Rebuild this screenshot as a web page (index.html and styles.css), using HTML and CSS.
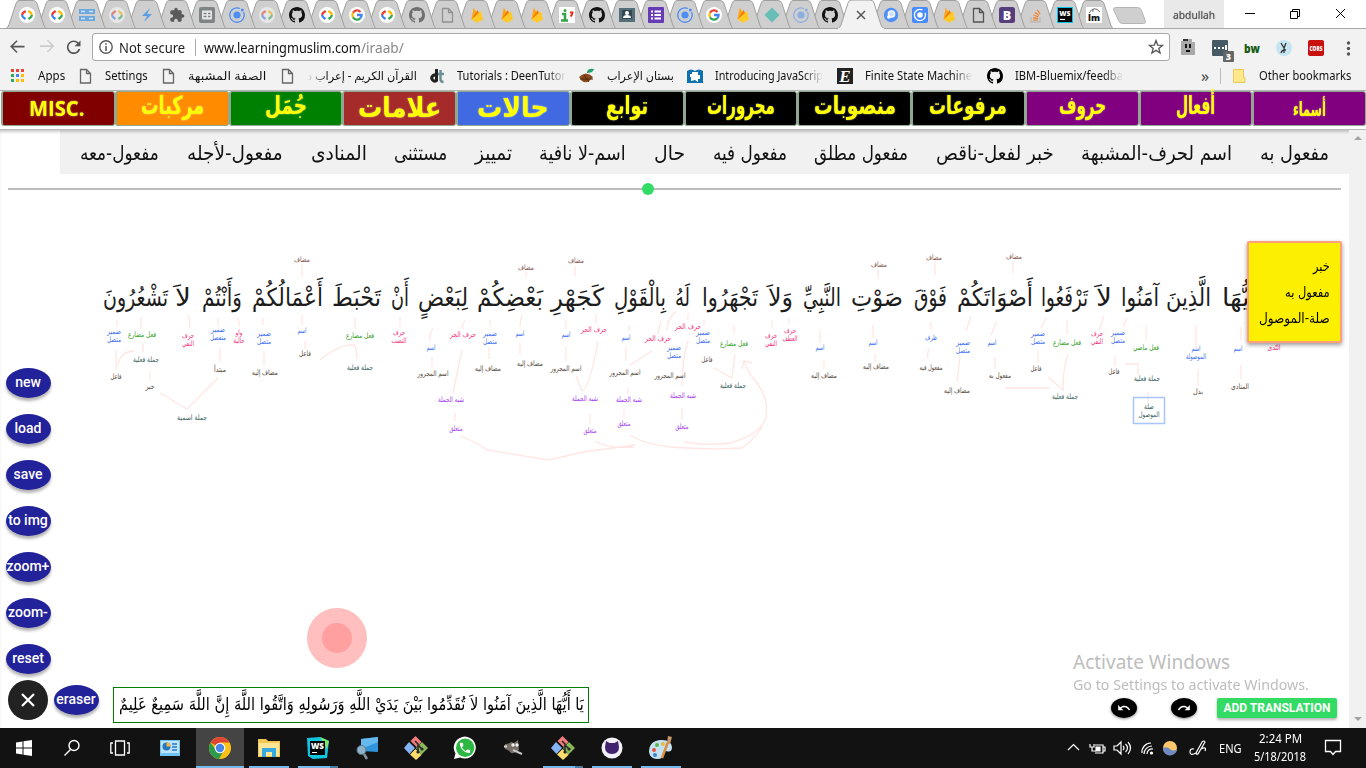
FILE: index.html
```html
<!DOCTYPE html>
<html lang="en">
<head>
<meta charset="utf-8">
<title>iraab</title>
<link rel="stylesheet" href="styles.css">
</head>
<body>
<svg class="defs" aria-hidden="true">
  <symbol id="dev" viewBox="0 0 16 16"><circle cx="8" cy="8" r="8" fill="#fff"/><g fill="none" stroke-width="2.3"><path d="M6.7 4 4.6 5.5Q3.2 6.6 3.2 8" stroke="#ea4335"/><path d="M3.2 8Q3.2 9.4 4.4 10.4L6.5 12" stroke="#4285f4"/><path d="M9.3 4 11.4 5.5Q12.8 6.6 12.8 8" stroke="#fbbc05"/><path d="M12.8 8Q12.8 9.4 11.6 10.4L9.5 12" stroke="#34a853"/></g></symbol>
  <symbol id="server" viewBox="0 0 16 16"><path d="M0 2h16v5H0zM0 9h16v5H0z" fill="#6ba7e0"/><path d="M2 4.500h4M10 4.500h4M2 11.500h4M10 11.500h4" stroke="#cfe4f8" stroke-width="1.4"/></symbol>
  <symbol id="bolt" viewBox="0 0 16 16"><path d="M11 1 3 9h5l-3 6 8-8H8z" fill="#5b9fe0"/></symbol>
  <symbol id="puzzle" viewBox="0 0 24 24"><path fill="#5a5a5a" d="M20.5 11H19V7c0-1.100-.9-2-2-2h-4V3.500C13 2.120 11.880 1 10.500 1S8 2.120 8 3.500V5H4c-1.100 0-1.990.9-1.990 2v3.800H3.500c1.490 0 2.700 1.210 2.700 2.700s-1.210 2.700-2.700 2.700H2V20c0 1.100.9 2 2 2h3.800v-1.500c0-1.490 1.210-2.700 2.700-2.700 1.490 0 2.700 1.210 2.700 2.700V22H17c1.100 0 2-.9 2-2v-4h1.500c1.380 0 2.500-1.120 2.500-2.500S21.880 11 20.500 11z"/></symbol>
  <symbol id="form" viewBox="0 0 16 16"><rect width="16" height="16" rx="2" fill="#7f8586"/><rect x="3" y="3.500" width="10" height="9" rx="1" fill="#e8e8e8"/><path d="M4.500 6.500h3M9 6.500h2.500M4.500 9.500h3M9 9.500h2.500" stroke="#7f8586" stroke-width="1.300"/></symbol>
  <symbol id="ionic" viewBox="0 0 16 16"><circle cx="8" cy="8" r="3.600" fill="#4e8ef7"/><path d="M11 1.500a7.200 7.200 0 1 0 3.500 3.500" fill="none" stroke="#4e8ef7" stroke-width="1.300"/><circle cx="13.300" cy="3" r="1.500" fill="#4e8ef7"/></symbol>
  <symbol id="github" viewBox="0 0 16 16"><path fill="currentColor" d="M8 0C3.580 0 0 3.580 0 8c0 3.540 2.290 6.530 5.470 7.590.4.070.55-.17.55-.38 0-.19-.01-.82-.01-1.490-2.010.37-2.530-.49-2.690-.94-.09-.23-.48-.94-.82-1.130-.28-.15-.68-.52-.01-.53.63-.01 1.080.58 1.230.82.72 1.210 1.870.87 2.330.66.07-.52.28-.87.51-1.070-1.780-.2-3.640-.89-3.640-3.950 0-.87.31-1.590.82-2.150-.08-.2-.36-1.020.08-2.120 0 0 .67-.21 2.200.82.64-.18 1.320-.27 2-.27s1.360.09 2 .27c1.530-1.040 2.200-.82 2.200-.82.44 1.100.16 1.920.08 2.120.51.56.82 1.270.82 2.150 0 3.070-1.870 3.750-3.650 3.950.29.25.54.73.54 1.480 0 1.070-.01 1.930-.01 2.200 0 .21.15.46.55.38A8.010 8.010 0 0 0 16 8c0-4.420-3.580-8-8-8z"/></symbol>
  <symbol id="google" viewBox="0 0 16 16"><circle cx="8" cy="8" r="8" fill="#fff"/><g fill="none" stroke-width="2.300"><path d="M11.500 4.900A4.600 4.600 0 0 0 4 5.800" stroke="#ea4335"/><path d="M4 5.800a4.600 4.600 0 0 0 0 4.400" stroke="#fbbc05"/><path d="M4 10.200a4.600 4.600 0 0 0 7.200 1.200" stroke="#34a853"/><path d="M11.200 11.400Q12.600 10 12.600 8H8" stroke="#4285f4"/></g></symbol>
  <symbol id="page" viewBox="0 0 16 16"><path d="M3.500 1.500h6l4 4v9.500h-10zM9.500 1.500v4h4" fill="none" stroke="currentColor" stroke-width="1.300"/></symbol>
  <symbol id="firebase" viewBox="0 0 16 16"><path d="M2.500 12.500 4.700.5l3.500 6z" fill="#ffa712"/><path d="M2.500 12.500 8.500 3l2 4z" fill="#f57c00"/><path d="m2.500 12.500 9.500-8.500 2 8.500-5.800 3.300z" fill="#ffca28"/></symbol>
  <symbol id="imark" viewBox="0 0 16 16"><path d="M0 0h16v16H0z" fill="#fff"/><path d="M3 7h3v6M2 13.500h7" fill="none" stroke="#35a54a" stroke-width="2.500"/><circle cx="6" cy="3.500" r="1.500" fill="#35a54a"/><path d="M11 5.500h2.500q0 2.500-2 4" fill="none" stroke="#e53020" stroke-width="2"/></symbol>
  <symbol id="card" viewBox="0 0 16 16"><path d="M0 1h16v14H0z" fill="#546e7a"/><path d="M3 3h10v9H3z" fill="#37474f"/><circle cx="8" cy="6" r="2" fill="#fff"/><path d="M4 11q0-3 4-3t4 3z" fill="#fff"/></symbol>
  <symbol id="list" viewBox="0 0 16 16"><rect width="16" height="16" rx="1" fill="#673ab7"/><path d="M3 4.500h2M6.500 4.500H13M3 8h2M6.500 8H13M3 11.500h2M6.500 11.500H13" stroke="#fff" stroke-width="1.800"/></symbol>
  <symbol id="diamond" viewBox="0 0 16 16"><path d="m8 .5 7.500 7.500L8 15.500.5 8z" fill="#67bfb8"/></symbol>
  <symbol id="rings" viewBox="0 0 16 16"><circle cx="8" cy="8" r="7.200" fill="#4e8ef7"/><circle cx="8.500" cy="7" r="3.200" fill="#cfe0ff" stroke="#fff" stroke-width="1.300"/><circle cx="5.800" cy="10" r="1.800" fill="#fff"/></symbol>
  <symbol id="ionicsq" viewBox="0 0 16 16"><rect width="16" height="16" rx="2" fill="#488aff"/><circle cx="8" cy="8" r="2.800" fill="#fff"/><path d="M10.500 3a5.600 5.600 0 1 0 2.600 2.800" fill="none" stroke="#fff" stroke-width="1.300"/></symbol>
  <symbol id="boot" viewBox="0 0 16 16"><rect width="16" height="16" rx="2.500" fill="#563d7c"/><text x="8" y="12.500" class="glyph" font-size="12.500" fill="#fff">B</text></symbol>
  <symbol id="stack" viewBox="0 0 16 16"><path d="M3 10v5h9v-5" fill="none" stroke="#bcbbbb" stroke-width="1.400"/><path d="M5 13h5M5 10.800l5 .6M5.500 8.300l4.900 1.500M6.800 5.500l4.300 2.800M9.200 2.800l3 4.200" stroke="#f48024" stroke-width="1.200"/></symbol>
  <symbol id="ws" viewBox="0 0 16 16"><path d="M0 0h16v16H0z" fill="#07c3f2"/><path d="M1 1h14v14H1z" fill="#000"/><text x="8" y="8.500" class="glyph" font-size="7" fill="#fff">WS</text><path d="M3 12.500h5" stroke="#fff" stroke-width="1.200"/></symbol>
  <symbol id="lm" viewBox="0 0 16 16"><path d="M0 0h16v16H0z" fill="#fff"/><path d="M3 6Q8-2 14 5M7 2v3" fill="none" stroke="#666"/><text x="8" y="14" class="glyph" font-size="9" fill="#111" textLength="12">lm</text></symbol>
  <symbol id="git" viewBox="0 0 24 24"><path d="m11.500 0 6 6-5 5-6-6z" fill="#f27b7b"/><path d="m5 6 6 6-5.500 6L0 12z" fill="#83b3f5"/><path d="m18 6 6 6-7 7-5-7z" fill="#88b858"/><path d="m11.500 13 6 6-5.500 5-6-5.500z" fill="#fbdc6c"/><path d="m11 5 3 3v9M14 9l4 4" fill="none" stroke="#282828" stroke-width="1.600"/><circle cx="14" cy="16" r="1.600" fill="#282828"/><circle cx="18" cy="13" r="1.600" fill="#282828"/></symbol>
</svg>

<header class="chrome">
  <div class="titlebar">
    <svg class="tabs" id="tabs" width="1156" height="29"></svg>
    <span class="profile"><span data-w="42">abdullah</span></span>
    <svg class="winctl" width="132" height="28" fill="none" stroke="#000"><path d="M15 13.500h10M60.500 11.500h7v7h-7zM62.500 11V9.500h7v7H68M106 9l9 9M115 9l-9 9"/></svg>
  </div>
  <div class="toolbar">
    <svg width="92" height="34"><g transform="translate(8.500 8) scale(.8)" fill="#555"><path d="M20 11H5.800l5.600-5.600L10 4l-8 8 8 8 1.400-1.400L5.800 13H20z"/></g><g transform="translate(56 7.500) scale(-.8 .8)" fill="#ccc"><path d="M20 11H5.800l5.600-5.600L10 4l-8 8 8 8 1.400-1.400L5.800 13H20z"/></g><g transform="translate(63.500 8) scale(.85)" fill="#555"><path d="M17.650 6.350C16.200 4.900 14.210 4 12 4c-4.420 0-7.990 3.580-7.990 8s3.570 8 7.990 8c3.730 0 6.840-2.550 7.730-6h-2.080c-.82 2.330-3.040 4-5.650 4-3.310 0-6-2.690-6-6s2.690-6 6-6c1.660 0 3.140.69 4.220 1.780L13 11h7V4l-2.350 2.350z"/></g></svg>
    <div class="omnibox">
      <svg width="16" height="16"><circle cx="8" cy="8" r="6.200" fill="none" stroke="#5a5a5a" stroke-width="1.400"/><path d="M8 4.200v1.600M8 7v5" stroke="#5a5a5a" stroke-width="1.600"/></svg>
      <span class="notsec"><span data-w="66">Not secure</span></span>
      <span class="url"><span data-w="157">www.learningmuslim.com</span><span class="path" data-w="43">/iraab/</span></span>
      <svg class="star" width="16" height="16"><path d="m8 1.500 1.700 4.600 4.900.2-3.800 3.100 1.300 4.700L8 11.400l-4.100 2.700 1.300-4.700-3.800-3.100 4.900-.2z" fill="none" stroke="#555" stroke-width="1.300"/></svg>
    </div>
    <svg class="exts" width="190" height="34">
      <path d="M6 12h5l1-2h5v3h3v13H6z" fill="#a9a9a9"/><path d="M8 12V10h5v2" fill="#333"/><path d="M11 15v4M15 15v4M11 22h4" stroke="#111" stroke-width="2"/>
      <rect x="37" y="11" width="16" height="16" rx="1" fill="#455a64"/><path d="M39 19h2M43 19h2M47 19h2M51 16v5" stroke="#fff" stroke-width="2"/><rect x="48" y="22" width="11" height="11" rx="1" fill="#666"/><text x="53.500" y="31" class="glyph" font-size="9" fill="#fff">3</text>
      <text x="77" y="24" class="glyph" font-size="12" fill="#175d17" textLength="16" lengthAdjust="spacingAndGlyphs">bw</text>
      <circle cx="109" cy="19" r="8" fill="#c5e5f2"/><path d="m106 14 3 5 2-5M109 19v5M106 24q1-4 5-3" fill="none" stroke="#333" stroke-width="1.300"/>
      <rect x="133" y="11" width="16" height="16" rx="2" fill="#c8100f"/><text x="141" y="21.500" class="glyph" font-size="6.500" fill="#fff" textLength="13" lengthAdjust="spacingAndGlyphs">CORS</text>
      <g fill="#555"><circle cx="173.500" cy="14" r="1.700"/><circle cx="173.500" cy="19.500" r="1.700"/><circle cx="173.500" cy="25" r="1.700"/></g>
    </svg>
  </div>
  <nav class="bookmarks">
    <a class="bm w-a"><svg width="14" height="14"><g fill="#ea4335"><path d="M0 0h3v3H0zM5 0h3v3H5zM10 0h3v3h-3z"/></g><path d="M0 5h3v3H0zM0 10h3v3H0z" fill="#34a853"/><path d="M5 5h3v3H5z" fill="#4285f4"/><path d="M10 5h3v3h-3zM5 10h3v3H5zM10 10h3v3h-3z" fill="#fbbc05"/></svg><span data-w="27">Apps</span></a>
    <a class="bm w-b"><svg class="grey" width="16" height="16"><use href="#page"/></svg><span data-w="43">Settings</span></a>
    <a class="bm w-c"><svg class="grey" width="16" height="16"><use href="#page"/></svg><span data-w="78">الصفة المشبهة</span></a>
    <a class="bm w-d"><svg class="grey" width="16" height="16"><use href="#page"/></svg><span class="fadel" data-w="110">القرآن الكريم - إعراب د</span></a>
    <a class="bm w-e"><svg width="16" height="16"><path d="M7.500 1v12.500M7.500 7.500a3 3 0 1 0 0 5" fill="none" stroke="#222" stroke-width="3"/><path d="M11.500 2v9q0 3 3 3M9 6h6" fill="none" stroke="#6d9096" stroke-width="2.500"/></svg><span class="fade" data-w="109">Tutorials : DeenTutor</span></a>
    <a class="bm w-f"><svg width="16" height="16"><path d="M0 9q7-7 14 0-6 8-11 4z" fill="#8b4a1c"/><path d="M1 11h13M5 7l5 7" stroke="#50290c"/><path d="M8 5q0-5 7-4-1 4-7 4" fill="#25a06c"/></svg><span data-w="67">بستان الإعراب</span></a>
    <a class="bm w-e"><svg width="16" height="16"><path d="M0 3q4-3 8 0 4-3 8 0v12H0z" fill="#0f71ad"/><path d="M5 4h6v3h2v4h-2v3l-3-2-4 1V9H3V6h2z" fill="#fff"/></svg><span class="fade" data-w="108">Introducing JavaScrip</span></a>
    <a class="bm w-e"><svg width="16" height="16"><path d="M0 0h16v16H0z" fill="#222"/><text x="8" y="14" class="serif" font-size="17" fill="#fff">E</text></svg><span class="fade" data-w="107">Finite State Machine</span></a>
    <a class="bm w-g"><svg class="ink" width="16" height="16"><use href="#github"/></svg><span class="fade" data-w="108">IBM-Bluemix/feedba</span></a>
    <span class="more">»</span>
    <a class="bm other"><svg width="13" height="14"><path d="M.5.5h10v8h1.500v5H.5z" fill="#ffe88c" stroke="#e9c95c"/></svg><span data-w="92">Other bookmarks</span></a>
  </nav>
</header>

<main class="app">
  <nav class="cats">
    <a class="cat maroon misc"><span data-w="55">MISC.</span></a>
    <a class="cat orange"><span data-w="63">مركبات</span></a>
    <a class="cat green"><span data-w="42">جُمَل</span></a>
    <a class="cat brown big"><span data-w="83">علامات</span></a>
    <a class="cat blue big"><span data-w="72">حالات</span></a>
    <a class="cat black"><span data-w="42">توابع</span></a>
    <a class="cat black"><span data-w="68">مجرورات</span></a>
    <a class="cat black"><span data-w="82">منصوبات</span></a>
    <a class="cat black"><span data-w="78">مرفوعات</span></a>
    <a class="cat purple"><span data-w="47">حروف</span></a>
    <a class="cat purple"><span data-w="39">أفعال</span></a>
    <a class="cat purple small"><span data-w="33">أسماء</span></a>
  </nav>
  <div class="scroller">
    <section class="view">
      <div class="subbar">
        <span data-w="69">مفعول به</span><span data-w="151">اسم لحرف-المشبهة</span><span data-w="118">خبر لفعل-ناقص</span><span data-w="94">مفعول مطلق</span><span data-w="74">مفعول فيه</span><span data-w="31">حال</span><span data-w="87">اسم-لا نافية</span><span data-w="37">تمييز</span><span data-w="53">مستثنى</span><span data-w="56">المنادى</span><span data-w="96">مفعول-لأجله</span><span data-w="79">مفعول-معه</span>
      </div>
      <div class="slider"><i class="knob"></i></div>
      <svg class="diagram" id="diagram" width="1349" height="598" viewBox="0 130 1349 598"></svg>
      <aside class="note"><span data-w="17">خبر</span><span data-w="45">مفعول به</span><span data-w="71">صلة-الموصول</span></aside>
      <div class="tools">
        <button class="pill">new</button><button class="pill">load</button><button class="pill">save</button><button class="pill">to img</button><button class="pill">zoom+</button><button class="pill">zoom-</button><button class="pill">reset</button>
      </div>
      <div class="watermark"><span class="wm1"><span data-w="157">Activate Windows</span></span><span class="wm2"><span data-w="236">Go to Settings to activate Windows.</span></span></div>
      <footer class="foot">
        <button class="close"><svg width="16" height="16"><path d="m2 2 12 12M14 2 2 14" stroke="#fff" stroke-width="2.200"/></svg></button>
        <button class="pill">eraser</button>
        <div class="verse"><span data-w="465">يَا أَيُّهَا الَّذِينَ آمَنُوا لاَ تُقَدِّمُوا بَيْنَ يَدَيْ اللَّهِ وَرَسُولِهِ وَاتَّقُوا اللَّهَ إِنَّ اللَّهَ سَمِيعٌ عَلِيمٌ</span></div>
        <div class="acts">
          <button class="round"><svg width="14" height="14" viewBox="0 0 24 24"><path fill="#fff" d="M12.500 8c-2.650 0-5.050.99-6.900 2.600L2 7v9h9l-3.620-3.620c1.390-1.160 3.160-1.880 5.120-1.880 3.540 0 6.550 2.310 7.600 5.500l2.370-.78C21.080 11.030 17.150 8 12.500 8z"/></svg></button>
          <button class="round redo"><svg width="14" height="14" viewBox="0 0 24 24"><path fill="#fff" transform="matrix(-1 0 0 1 24 0)" d="M12.500 8c-2.650 0-5.050.99-6.900 2.600L2 7v9h9l-3.620-3.620c1.390-1.160 3.160-1.880 5.120-1.880 3.540 0 6.550 2.310 7.600 5.500l2.370-.78C21.080 11.030 17.150 8 12.500 8z"/></svg></button>
          <button class="add"><span data-w="107">ADD TRANSLATION</span></button>
        </div>
      </footer>
    </section>
    <div class="scrollbar"><i class="up"></i><i class="down"></i></div>
  </div>
</main>

<footer class="taskbar">
  <span class="tk"><svg width="18" height="18"><path d="M1 3.500 7.500 2.500v6H1zM8.500 2.300 17 1v7.500H8.500zM1 9.500h6.500v6L1 14.500zM8.500 9.500H17V17l-8.500-1.300z" fill="#fff"/></svg></span>
  <span class="tk"><svg width="18" height="18" fill="none" stroke="#fff" stroke-width="1.400"><circle cx="11" cy="6.500" r="5"/><path d="m7.500 10.500-6 6"/></svg></span>
  <span class="tk"><svg width="20" height="18" fill="none" stroke="#fff" stroke-width="1.300"><path d="M5.500 2h9v14h-9zM3 4H.8v10H3M17 4h2.200v10H17"/></svg></span>
  <span class="tk wide"><svg width="20" height="20"><path d="M0 2h20v16H0z" fill="#6fc4f1"/><path d="M1 3h18v12H1z" fill="#bfe3f8"/><circle cx="6.500" cy="8.500" r="4" fill="#2678c4"/><path d="M6.500 8.500v-4a4 4 0 0 1 4 4z" fill="#f5b73c"/><path d="M12 6h5M12 9h5M12 12h5" stroke="#2678c4" stroke-width="1.500"/></svg></span>
  <span class="tk on active"><svg width="24" height="24"><circle cx="12" cy="12" r="11" fill="#fbc116"/><path d="M12 12 2.500 6.500A11 11 0 0 1 21.500 6.500H12z" fill="#df4535"/><path d="M2.500 6.500A11 11 0 0 0 11 23l5-9-8 0z" fill="#2c9c4b"/><circle cx="12" cy="12" r="5.300" fill="#fff"/><circle cx="12" cy="12" r="4.200" fill="#4a86e8"/></svg></span>
  <span class="tk on"><svg width="22" height="20"><path d="M0 1h8l2 2h12v16H0z" fill="#f3c754"/><path d="M1 5h20v13H1z" fill="#ffe596"/><path d="M4 10h14v9h-4v-5H8v5H4z" fill="#36a9e1"/></svg></span>
  <span class="tk on multi"><svg width="24" height="24"><path d="m1 2 13-1 9 4-2 17-14 1-5-3z" fill="#13c4df"/><path d="m14 1 9 4-2 8z" fill="#7fe56b"/><path d="M4 5h15v14H4z" fill="#050505"/><text x="11.500" y="13" class="glyph" font-size="8" fill="#fff">WS</text><path d="M6 16.500h5" stroke="#fff"/></svg></span>
  <span class="tk"><svg width="24" height="24"><path d="m6 3 17-2v15L6 15z" fill="#3095dd"/><path d="m6 3 17-2v5L6 13z" fill="#66b9ef"/><circle cx="6.500" cy="14" r="4.500" fill="#8eb3c8" stroke="#577788"/><path d="m9 18 3 5" stroke="#87909a" stroke-width="2.500"/></svg></span>
  <span class="tk"><svg width="24" height="24"><use href="#git"/></svg></span>
  <span class="tk"><svg width="24" height="24" viewBox="0 0 24 24"><path d="M1 23 2.500 17.500A11 11 0 1 1 7 21.500z" fill="#fff"/><circle cx="12.200" cy="11.800" r="9.200" fill="#2cb742"/><g transform="translate(5.200 5) scale(.57)"><path fill="#fff" d="M6.620 10.790c1.440 2.830 3.760 5.140 6.590 6.590l2.200-2.200c.27-.27.67-.36 1.020-.24 1.120.37 2.330.57 3.570.57.55 0 1 .45 1 1V20c0 .55-.45 1-1 1-9.390 0-17-7.610-17-17 0-.55.45-1 1-1h3.500c.55 0 1 .45 1 1 0 1.250.2 2.450.57 3.570.11.35.03.74-.25 1.020l-2.200 2.200z"/></g></svg></span>
  <span class="tk"><svg width="22" height="18"><path d="M2 5q4 0 6-2l3 1 4-3 1 10q-4 4-8 3-2-3-6-4z" fill="#776f65"/><circle cx="10" cy="6" r="1.700" fill="#eee"/><circle cx="14" cy="6" r="1.700" fill="#eee"/><path d="M1 7.500h3" stroke="#ddd" stroke-width="2"/><path d="m10 11 9 4" stroke="#c5c5c5" stroke-width="2"/></svg></span>
  <span class="tk on multi"><svg width="24" height="24"><use href="#git"/></svg></span>
  <span class="tk on"><svg width="24" height="24"><circle cx="12" cy="12" r="10.500" fill="#f2f0f7"/><path d="m6 5 3.500 2h5L18 5l1 6q0 7-7 7T5 11z" fill="#42216f"/></svg></span>
  <span class="tk on"><svg width="26" height="26"><path d="M1 17Q1 6 12 5t12 7q0 6-6 4-3 0-2 3 0 5-7 5T1 17z" fill="#c5e2f2"/><circle cx="6" cy="15" r="2" fill="#e5533a"/><circle cx="9" cy="10" r="2" fill="#5bb74c"/><circle cx="15" cy="9" r="2" fill="#e4bb3c"/><circle cx="7" cy="20" r="2" fill="#3d7ec4"/><path d="m14 23 6-16" stroke="#d98e44" stroke-width="2.500"/><path d="m19 8 1-7 4 1-2 7z" fill="#c8986a"/></svg></span>
  <div class="tray">
    <svg width="146" height="24" fill="none" stroke="#fff" stroke-width="1.200"><path d="m1 14 5.500-5.500L12 14M28 9h8v8h-8M36 11h2v4h-2M23 8v3h4V8M25 11v4h4M47 10h3l4-4v12l-4-4h-3zM56 10q2 2 0 4M58.500 8q4 4 0 8M61 6q5 6 0 12"/><path d="M75 17a9 9 0 0 1 9-10M77 18a8 8 0 0 1 8-8M80 18a5 5 0 0 1 6-5"/><circle cx="84.500" cy="17" r="1" fill="#fff"/><circle cx="103" cy="12" r="7" fill="#ffc66c" stroke="none"/><path d="M96 12q4-2 7 1t7 0a7 7 0 0 1-14-1" fill="#6f8ac0" stroke="none"/><path d="M127 13q-4-1-4 3t6 1l6-11q2-2 3 0l-7 12q-3 1-1-3M134 13q6-3 4 2"/><path d="M29 11h4v4h-4z" fill="#fff"/></svg>
    <span class="eng"><span data-w="23">ENG</span></span>
    <div class="clock"><span data-w="43">2:24 PM</span><span data-w="52">5/18/2018</span></div>
    <svg width="18" height="18"><path d="M1.500 1.500h15v11h-5l-2.500 3-2.500-3h-5z" fill="none" stroke="#fff" stroke-width="1.300"/></svg>
  </div>
</footer>
<script src="script.js"></script>
</body>
</html>
```

FILE: styles.css
```css
* { box-sizing: border-box; }
body { margin: 0; width: 1366px; height: 768px; overflow: hidden; background: #fff; font-family: "Noto Sans", "DejaVu Sans", sans-serif; font-size: 12px; }
.defs { position: absolute; width: 0; height: 0; }
svg { display: block; flex: none; }
button { border: 0; padding: 0; font: inherit; }
[data-w] { display: inline-block; flex: none; direction: ltr; white-space: nowrap; text-align: left; }
[data-w] > span { display: inline-block; transform-origin: 0 50%; }
.glyph { font-family: "Open Sans", sans-serif; font-weight: 800; text-anchor: middle; }
.serif { font-family: "Liberation Serif", serif; font-weight: 700; font-style: italic; text-anchor: middle; }

.chrome { height: 91px; background: #f2f2f2; border-bottom: 1px solid #b3b3b3; }
.titlebar { height: 29px; display: flex; background: #fff; border-bottom: 1px solid #a8a8a8; }
.tabs { overflow: visible; margin-right: 8px; }
.profile { width: 60px; height: 28px; background: #e9e9e9; display: flex; align-items: center; justify-content: center; font-size: 11.500px; color: #555; text-shadow: 0 0 1px #777; }
.winctl { margin-left: 6px; }
.toolbar { height: 34px; display: flex; }
.omnibox { width: 1078px; height: 28px; margin-top: 4px; border: 1px solid #a9a9a9; border-radius: 3px; background: #fff; display: flex; align-items: center; padding-left: 5px; font-size: 14px; }
.notsec { margin-left: 5px; padding-right: 10px; border-right: 1px solid #aaa; line-height: 17px; color: #222; }
.url { margin-left: 8px; display: flex; color: #111; line-height: 17px; }
.path { color: #888; }
.star { margin-left: auto; margin-right: 5px; }
.exts { margin-left: 5px; }
.bookmarks { height: 27px; display: flex; align-items: center; padding: 0 0 1px 11px; }
.bm { display: flex; align-items: center; gap: 12px; color: #111; line-height: 18px; }
.w-a { width: 66px; gap: 13px; } .w-b { width: 83px; } .w-c { width: 119px; } .w-d { width: 150px; }
.w-e { width: 150px; } .w-f { width: 108px; } .w-g { width: 214px; }
.grey { color: #666; } .ink { color: #000; }
.fade { -webkit-mask-image: linear-gradient(90deg, #000 82%, transparent); mask-image: linear-gradient(90deg, #000 82%, transparent); }
.fadel { -webkit-mask-image: linear-gradient(270deg, #000 82%, transparent); mask-image: linear-gradient(270deg, #000 82%, transparent); }
.more { width: 19px; font-size: 16px; line-height: 16px; color: #444; }
.other { border-left: 1px solid #bbb; padding-left: 12px; height: 16px; gap: 13px; }

.app { height: 637px; }
.cats { height: 38px; padding-left: 1px; display: grid; grid-template-columns: repeat(12, 1fr); background: #fff; }
.cat { height: 35px; border: 1px solid #8fa890; border-left-width: 2px; border-radius: 3px; display: flex; align-items: center; justify-content: center; color: #ff0; font-family: "DejaVu Sans", sans-serif; font-weight: 700; font-size: 25px; line-height: 30px; text-shadow: 0 0 2px rgba(255, 255, 255, .7); padding-bottom: 5px; }
.misc { font-family: "Open Sans", sans-serif; font-size: 22px; padding: 0 3px 3px 0; }
.big { font-size: 28px; padding-bottom: 2px; } .small { font-size: 20px; padding-bottom: 0; }
.maroon { background: #800000; } .orange { background: #ff8c00; } .green { background: #008000; } .brown { background: #a52a2a; }
.blue { background: #4169e1; } .black { background: #000; } .purple { background: #800080; }
.scroller { height: 599px; display: flex; border-top: 1px solid #b8b8b8; box-shadow: inset 0 3px 3px -1px #ccc; }
.view { position: relative; width: 1349px; height: 598px; display: flex; flex-direction: column; }
.subbar { height: 44px; margin-left: 60px; padding: 2px 20px 0 0; background: rgba(0, 0, 0, .055); direction: rtl; display: flex; align-items: center; gap: 27.600px; font-family: "DejaVu Sans", sans-serif; font-size: 20px; line-height: 40px; color: #111; }
.slider { height: 2px; background: #bdbdbd; margin: 14px 8px 0; display: flex; align-items: center; }
.knob { width: 12px; height: 12px; border-radius: 50%; background: #32db64; margin-left: 634px; flex: none; }
.diagram { position: absolute; left: 0; top: 0; font-family: "DejaVu Sans", sans-serif; z-index: 0; }
.aya { font-size: 25px; fill: #1c1c1c; }
.lbl { font-size: 7.500px; }
.strokes { fill: none; stroke: #ffe6e3; stroke-width: 1.300; }
.note { position: absolute; left: 1247px; top: 111px; width: 95px; height: 102px; background: #fcf000; border: 2px solid #ffa07a; border-radius: 2px; box-shadow: 0 2px 4px rgba(0, 0, 0, .4); display: flex; flex-direction: column; align-items: flex-end; padding: 10px 10px 0; font-family: "DejaVu Sans", sans-serif; font-size: 14px; line-height: 26px; }
.tools { position: relative; width: 60px; margin-top: 178px; padding-left: 6px; display: flex; flex-direction: column; gap: 16px; }
.pill { width: 45px; height: 30px; border-radius: 50%; background: #22229a; color: #fff; font: 500 14px/29px Roboto, sans-serif; padding: 0 1px 1px 0; display: flex; justify-content: center; white-space: nowrap; box-shadow: 0 3px 3px rgba(0, 0, 0, .3); flex: none; }
.watermark { position: absolute; left: 1073px; top: 518px; display: flex; flex-direction: column; color: #bdbdbd; }
.wm1 { font-size: 19px; line-height: 28px; } .wm2 { font-size: 14px; line-height: 18px; }
.foot { position: relative; display: flex; align-items: center; height: 42px; margin-top: 5px; padding-left: 8px; }
.close { width: 40px; height: 40px; border-radius: 50%; background: #222; display: flex; align-items: center; justify-content: center; margin-right: 6px; }
.verse { margin: 9px 0 0 14px; width: 476px; height: 36px; border: 1px solid #008000; padding-left: 5px; font-family: "DejaVu Sans", sans-serif; font-size: 17.500px; line-height: 32px; }
.acts { margin: 15px 0 0 522px; display: flex; align-items: center; }
.round { width: 26px; height: 20px; border-radius: 50%; background: #000; display: flex; align-items: center; justify-content: center; box-shadow: 0 1px 3px #888; }
.redo { margin-left: 34px; }
.add { margin-left: 20px; width: 120px; height: 20px; border-radius: 2px; background: #32db64; color: #fff; font: 700 12px/20px Roboto, sans-serif; box-shadow: 0 2px 3px rgba(0, 0, 0, .3); }
.scrollbar { width: 17px; background: #f1f1f1; display: flex; flex-direction: column; justify-content: space-between; align-items: center; padding: 6px 0 7px; }
.up { border: 4px solid transparent; border-top: 0; border-bottom-color: #a3a3a3; }
.down { border: 4px solid transparent; border-bottom: 0; border-top-color: #a3a3a3; }

.taskbar { height: 40px; background: #121213; display: flex; color: #fff; }
.tk { width: 48px; height: 40px; display: flex; align-items: center; justify-content: center; margin-right: 1px; }
.tk:nth-child(-n+3) { margin-right: 0; }
.tk.wide { width: 52px; margin-right: 0; }
.on { background: linear-gradient(#76b9ed, #76b9ed) 50% 100% / 40px 2px no-repeat; }
.multi { background: linear-gradient(90deg, #76b9ed 32px, #4a7ba3 32px) 50% 100% / 40px 2px no-repeat; }
.active { background: linear-gradient(#76b9ed, #76b9ed) 0 100% / 100% 2px no-repeat, #444; }
.tray { margin-left: auto; display: flex; align-items: center; width: 299px; }
.eng { margin-left: 6px; }
.clock { display: flex; flex-direction: column; align-items: center; width: 52px; margin: 0 18px 0 12px; line-height: 18px; }
```

FILE: script.js
```js
// Squeeze each marked text run into its column width.
document.querySelectorAll('[data-w]').forEach(function (el) {
  var inner = document.createElement('span');
  inner.textContent = el.textContent;
  if (/[\u0600-\u06ff]/.test(inner.textContent)) inner.dir = 'rtl';
  el.textContent = '';
  el.appendChild(inner);
  var w = +el.dataset.w;
  var natural = inner.offsetWidth;
  el.style.width = w + 'px';
  inner.style.transform = 'scaleX(' + w / natural + ')';
});

// Browser tabs; a trailing * marks a faded icon
var icons = 'dev dev server dev* bolt puzzle form ionic dev* github dev google dev github* page* firebase firebase firebase imark github card list ionic google firebase diamond ionic* github ACTIVE rings ionicsq firebase page boot stack ws lm'.split(' ');
var shapes = '', marks = '', active = '';
icons.forEach(function (name, i) {
  var c = i <= 20 ? 27 + 30 * i : 627 + 29 * (i - 20);
  if (name === 'ACTIVE') {
    active = '<path d="M837 29q3-1 4-4l7-22q1-3 4-3h18q3 0 4 3l7 22q1 3 4 4" fill="#f2f2f2" stroke="#a0a0a0"/><path d="M838 29h46" stroke="#f2f2f2" stroke-width="2"/><path d="m857 11 8 8m0-8-8 8" stroke="#555" stroke-width="1.500"/>';
    return;
  }
  if (i > 28) c = 891 + 29 * (i - 29);
  shapes = '<path d="M' + (c - 21) + ' 28.5q2-1 3-4l7-21q1-3 3-3h14q3 0 4 3l7 22q1 2 2 3z" fill="#cfcfcf" stroke="#a0a0a0"/>' + shapes;
  var faint = name.slice(-1) === '*';
  marks += '<use href="#' + name.replace('*', '') + '" x="' + (c - 8) + '" y="7" width="16" height="16" color="' + (name.indexOf('page') === 0 ? '#555' : '#111') + '"' + (faint ? ' opacity=".5"' : '') + '/>';
});
document.getElementById('tabs').innerHTML = shapes + marks + active +
  '<path d="M1115.500 7.500h22q3 0 4 3l4 11q0 2-2 2h-21q-3 0-4-3l-5-11q0-2 2-2z" fill="#cfcfcf" stroke="#b5b5b5"/>';

// Verse words: text, left edge, right edge
var words = [
  ['يَا', 1262, 1285], ['أَيُّهَا', 1222, 1257], ['الَّذِينَ', 1166, 1211], ['آمَنُوا', 1121, 1159], ['لاَ', 1096, 1112],
  ['تَرْفَعُوا', 1041, 1088], ['أَصْوَاتَكُمْ', 957, 1033], ['فَوْقَ', 914, 947], ['صَوْتِ', 851, 903], ['النَّبِيِّ', 803, 841],
  ['وَلاَ', 768, 793], ['تَجْهَرُوا', 702, 758], ['لَهُ', 675, 690], ['بِالْقَوْلِ', 614, 666], ['كَجَهْرِ', 551, 604],
  ['بَعْضِكُمْ', 477, 543], ['لِبَعْضٍ', 418, 468], ['أَنْ', 391, 409], ['تَحْبَطَ', 332, 381], ['أَعْمَالُكُمْ', 252, 323],
  ['وَأَنْتُمْ', 202, 242], ['لاَ', 175, 191], ['تَشْعُرُونَ', 103, 168]
];

// Grammar labels by colour: text, centre x, centre y, width, width of the first line if it is shorter; "/" breaks a line
var M = 'مضاف', D = 'ضمير/متصل', F = 'فعل مضارع', N = 'حرف/النفي', I = 'اسم', J = 'حرف الجر', A = 'فاعل',
    G = 'جملة فعلية', E = 'مضاف إليه', R = 'اسم المجرور', S = 'شبه الجملة', T = 'متعلق';
var groups = {
  '#84544c': [[M,302,260,16],[M,526,268,16],[M,576,261,16],[M,879,265,16],[M,934,258,16],[M,1014,257,16]],
  '#3a6df0': [[D,114,336,14],['ضمير/منفصل',218,334,16,14],[D,264,338,14],[I,302,331,9],[I,431,348,9],[D,490,338,14],[I,520,334,9],[I,566,335,9],[I,626,338,9],[D,674,352,14],[D,703,337,14],[I,820,348,9],[I,873,343,9],['ظرف',931,338,12],[D,963,347,14],[I,992,343,9],[D,1038,338,14],[D,1118,337,14],['اسم/الموصولة',1196,353,20,9],[I,1238,349,9]],
  '#2fa01c': [[F,142,335,28],[F,360,336,28],[F,734,344,28],[F,1067,343,28],['فعل ماضي',1146,348,26]],
  '#f0307c': [[N,188,340,12],['واو/حالية',239,337,11,7],['حرف/النصب',399,337,15,12],[J,463,335,26],[J,594,330,26],[J,658,339,26],[J,688,327,26],[N,771,340,12],['حرف/العطف',790,335,15,12],[N,1097,338,12],['النّدى',1274,348,13]],
  '#55493c': [[A,116,377,11],['خبر',150,387,9],['مبتدأ',220,370,12],[E,265,373,26],[A,305,354,12],[R,433,374,31],[E,488,369,26],[E,530,364,26],[R,566,369,31],[R,625,373,31],[R,670,376,31],[A,707,360,11],[E,824,376,26],[E,876,367,26],['مفعول فيه',931,368,23],['مفعول به',1000,376,22],[A,1036,369,11],[E,957,391,26],[A,1114,372,11],['بدل',1198,392,10],['المنادى',1240,387,18]],
  '#3b6361': [[G,146,360,26],[G,360,368,26],['جملة اسمية',192,418,30],[G,733,386,26],[G,1147,379,26],[G,1065,397,26],['صلة/الموصول',1149,411,21,10]],
  '#a43cf0': [[S,451,400,26],[S,585,399,26],[S,629,400,26],[S,683,396,26],[T,456,429,13],[T,590,431,13],[T,624,424,13],[T,682,427,13]]
};

function label(text, cx, baseline, w, cls) {
  return '<text class="' + cls + '" direction="rtl" text-anchor="middle" data-fit="' + [cx, baseline, w] + '">' + text + '</text>';
}

var out = '<path class="strokes" d="M302 264v13M526 271v6M575 266v10M878 269v10M935 262v13M1013 261v12' +
  'M117 320v7M116 350v19M118 366q1-14 16-15M141 317v12M143 344v8M150 371v10M160 393l27 16 31-31M188 315q3 7 1 13M218 318v8M237 318q3 3 2 8M220 348v14M263 318v7M264 351v14M302 315v10M305 341v8M320 360q20-16 34-15 3 3 3 14M355 318v11M400 317v10M433 328q-4 6-3 13M432 357v10M465 320q-3 5-3 9M462 350 453 393M455 413v8' +
  'M490 320v6M489 347v12M522 315q-2 7-2 12M520 343v12M566 320v9M566 347v14M596 314v9M598 341Q590 387 582 391l-6-15M590 414v10M629 325v6M626 347v14M652 351l-22 14M661 321l-3 13M676 311q-10 10-9 20M688 313v7M688 341q-6 17-6 45M628 388v6M624 409v9M682 408v12M704 320v6M734 325v9M735 354l-3 24-18-10M772 320v8M789 318v6M820 330v13M824 361v8M873 325v13M875 354v8' +
  'M931 322v8M929 349q-2 4-1 10M971 316l-5 15M960 357l-3 25M997 321l-6 14M995 357v12M1046 318l-5 10M1038 351v12M1067 320v14M1068 354q-5 13-5 36l-15-13M1005 388h45M1104 316l-5 14M1127 318l-4 9M1146 325v16M1115 356v10M1125 364h13v11M1148 392v10M1196 325v24M1198 369v17M1241 327v13M1241 365v14M1276 325v15' +
  'M460 436q16 6 27 14l62 10 34-8 52-7M595 441q12 8 38 6M630 435q14 9 40 12 40 3 72 1 12-8 20-21M684 442q24 4 46 1 32-9 36-26 3-22-14-40-6-10-8-16l-2 8m2-8 8 2"/>';
words.forEach(function (v) { out += label(v[0], (v[1] + v[2]) / 2, 306, v[2] - v[1], 'aya'); });
Object.keys(groups).forEach(function (colour) {
  out += '<g fill="' + colour + '">';
  groups[colour].forEach(function (g) {
    var lines = g[0].split('/');
    lines.forEach(function (line, k) {
      out += label(line, g[1], g[2] + 2 + (lines.length > 1 ? k * 8 - 4 : 0), k === 0 && g[4] ? g[4] : g[3], 'lbl');
    });
  });
  out += '</g>';
});
out += '<rect x="1133.500" y="397.500" width="31" height="26" fill="none" stroke="#a9c4f8" stroke-width="1.500"/>' +
  '<circle cx="337" cy="638" r="30" fill="#ffbfbf"/><circle cx="337" cy="638" r="15" fill="#ff9f9f"/>';
var diagram = document.getElementById('diagram');
diagram.innerHTML = out;
diagram.querySelectorAll('[data-fit]').forEach(function (t) {
  var f = t.dataset.fit.split(',').map(Number);
  t.setAttribute('transform', 'translate(' + f[0] + ' ' + f[1] + ') scale(' + f[2] / t.getComputedTextLength() + ' 1)');
});
```
